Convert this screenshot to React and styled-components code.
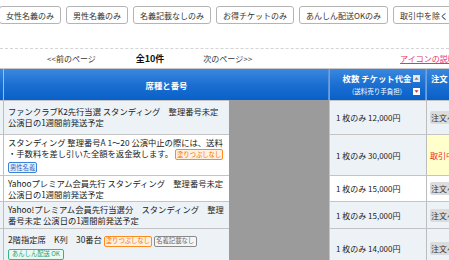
import React from 'react'
import styled, { createGlobalStyle } from 'styled-components'

const GlobalStyle = createGlobalStyle`
    body {
        margin:0;
        overflow:hidden;
        background:#fff;
        font-family:"Noto Sans CJK JP", "Noto Sans", sans-serif;
        color:#222;
    }
`

const filters = ['女性名義のみ', '男性名義のみ', '名義記載なしのみ', 'お得チケットのみ', 'あんしん配送OKのみ', '取引中を除く']

const rows = [
    {
        lines: ['ファンクラブK2先行当選 スタンディング　整理番号未定', '公演日の1週間前発送予定'],
        price: '1 枚のみ 12,000円',
        mainBg: '#edf2f7',
        priceBg: '#edf2f7',
    },
    {
        lines: ['スタンディング 整理番号A 1～20 公演中止の際には、送料', '・手数料を差し引いた全額を返金致します。'],
        tags: ['nofill', 'male'],
        price: '1 枚のみ 30,000円',
        mainBg: '#fff',
        priceBg: '#edf2f7',
        busy: true,
    },
    {
        lines: ['Yahooプレミアム会員先行 スタンディング　整理番号未定', '公演日の1週間前発送予定'],
        price: '1 枚のみ 15,000円',
        mainBg: '#fff',
        priceBg: '#fff',
    },
    {
        lines: ['Yahoo!プレミアム会員先行当選分　スタンディング　整理番号未定 公演日の1週間前発送予定'],
        price: '1 枚のみ 15,000円',
        mainBg: '#edf2f7',
        priceBg: '#edf2f7',
    },
    {
        lines: ['2階指定席　K列　30番台'],
        tags: ['nofill', 'noname', 'safe'],
        price: '1 枚のみ 14,000円',
        mainBg: '#edf2f7',
        priceBg: '#edf2f7',
    },
]

const tagText = {
    nofill: '塗りつぶしなし',
    male: '男性名義',
    noname: '名義記載なし',
    safe: 'あんしん配送 OK',
}

const SortIcons = () => (
    <SortBox>
        <svg width="7" height="7" viewBox="0 0 7 7">
            <rect x="0" y="0" width="7" height="7" fill="#e8e8e8" />
            <path d="M1.5 4.8 L3.5 2.2 L5.5 4.8 Z" fill="#777" />
        </svg>
        <svg width="7" height="7" viewBox="0 0 7 7">
            <rect x="0" y="0" width="7" height="7" fill="#fff" />
            <path d="M1.5 2.2 L3.5 4.8 L5.5 2.2 Z" fill="#e0203a" />
        </svg>
    </SortBox>
)

const App = () => (
    <Page>
        <GlobalStyle />
        <FilterBar>
            {filters.map(f => <FilterButton key={f}>{f}</FilterButton>)}
        </FilterBar>
        <Pager>
            <PagerLink $left={47}>&lt;&lt;前のページ</PagerLink>
            <PagerCount>全10件</PagerCount>
            <PagerLink $left={39}>次のページ&gt;&gt;</PagerLink>
            <HelpLink>アイコンの説明</HelpLink>
        </Pager>
        <Table>
            <HeadCell $col={1} />
            <HeadCell $col="2 / span 2">席種と番号</HeadCell>
            <HeadCell $col={4} $divider>
                <PriceHead>
                    <HeadTitles>
                        <span>枚数 チケット代金</span>
                        <HeadSub>(送料売り手負担)</HeadSub>
                    </HeadTitles>
                    <SortIcons />
                </PriceHead>
            </HeadCell>
            <HeadCell $col={5} $divider $top>注文</HeadCell>

            {rows.map((r, i) => (
                <React.Fragment key={i}>
                    <EdgeCell $row={i + 2} $bg={r.mainBg} />
                    <MainCell $row={i + 2} $bg={r.mainBg}>
                        {r.lines.map((l, j) => (
                            <React.Fragment key={j}>
                                {j > 0 && <br />}
                                {l}
                            </React.Fragment>
                        ))}
                        {r.tags && r.tags.map(t => (
                            <React.Fragment key={t}>
                                {t === 'male' || t === 'safe' ? <br /> : ' '}
                                <Tag $kind={t}>{tagText[t]}</Tag>
                            </React.Fragment>
                        ))}
                    </MainCell>
                    {i === 0 && <Redacted />}
                    <PriceCell $row={i + 2} $bg={r.priceBg}>{r.price}</PriceCell>
                    <OrderCell $row={i + 2} $busy={r.busy} $bg={r.priceBg}>
                        {r.busy ? <Busy>取引中</Busy> : <OrderButton>注文へ進む</OrderButton>}
                    </OrderCell>
                </React.Fragment>
            ))}
        </Table>
    </Page>
)

export default App

const Page = styled.div`
    width:449px;
    height:260px;
    overflow:hidden;
    font-size:8.3px;
`

const FilterBar = styled.div`
    display:flex;
    gap:5px;
    padding:6px 0 0 0;
    margin-left:-1px;
    height:18px;
    white-space:nowrap;
`

const FilterButton = styled.div`
    flex:none;
    display:flex;
    align-items:center;
    height:16px;
    padding:0 6px;
    border:1px solid #b4b4b4;
    border-radius:3px;
    background:#fff;
    color:#333;
    font-size:8px;
`

const Pager = styled.div`
    margin-top:24px;
    height:19px;
    border-top:1px dashed #d4d4d4;
    display:flex;
    align-items:center;
    white-space:nowrap;
    font-size:8px;
`

const PagerLink = styled.span`
    margin-left:${p => p.$left}px;
    color:#333;
`

const PagerCount = styled.span`
    margin-left:40px;
    font-weight:bold;
    font-size:9px;
    color:#111;
`

const HelpLink = styled.span`
    margin-left:148px;
    color:#e8336b;
    text-decoration:underline;
`

const Table = styled.div`
    display:grid;
    grid-template-columns:4px 225px 100px 97px 80px;
    grid-template-rows:31px 34px 41px 26px 27px 40px;
    border-top:1px solid #c8c8c8;
`

const HeadCell = styled.div`
    grid-column:${p => p.$col};
    grid-row:1;
    display:flex;
    align-items:${p => (p.$top ? 'flex-start' : 'center')};
    justify-content:${p => (p.$top ? 'flex-start' : 'center')};
    padding:${p => (p.$top ? '3px 0 0 4px' : '0')};
    background:linear-gradient(to bottom, #3a88de 0%, #1c6fd2 50%, #0860c8 100%);
    border-left:1px solid ${p => (p.$divider ? '#6aa2e2' : 'transparent')};
    border-right:1px solid #5d93d4;
    color:#fff;
    font-weight:bold;
    font-size:8.4px;
    white-space:nowrap;
    overflow:hidden;
    &:first-child {
        border-right:1px solid #9cbde4;
    }
`

const PriceHead = styled.div`
    display:flex;
    align-items:center;
    gap:2px;
    margin-left:8px;
`

const HeadTitles = styled.div`
    display:flex;
    flex-direction:column;
    align-items:center;
    line-height:13px;
`

const HeadSub = styled.span`
    font-weight:normal;
    font-size:6.5px;
`

const SortBox = styled.div`
    display:flex;
    flex-direction:column;
    gap:6px;
    margin-top:1px;
    svg {
        display:block;
    }
`

const BodyCell = styled.div`
    grid-row:${p => p.$row};
    background:${p => p.$bg};
    border-top:1px solid #c4c4c4;
`

const EdgeCell = styled(BodyCell)`
    grid-column:1;
    border-right:1px solid #bdbdbd;
`

const MainCell = styled(BodyCell)`
    grid-column:2;
    padding:${p => (p.$row === 2 || p.$row === 6 ? 5 : 2)}px 0 0 4px;
    line-height:10.6px;
    font-size:8.3px;
    color:#222;
    overflow:hidden;
`

const Redacted = styled.div`
    grid-column:3;
    grid-row:2 / span 5;
    background:#9b9b9b;
`

const PriceCell = styled(BodyCell)`
    grid-column:4;
    display:flex;
    align-items:center;
    padding-left:6px;
    border-left:1px solid #c4c4c4;
    font-size:8px;
    white-space:nowrap;
`

const OrderCell = styled(BodyCell)`
    grid-column:5;
    display:flex;
    align-items:center;
    padding-left:3px;
    border-left:1px solid #bdbdbd;
    background:${p => (p.$busy ? '#ffffcc' : p.$bg)};
    white-space:nowrap;
    overflow:hidden;
`

const OrderButton = styled.span`
    background:#dcdcdc;
    border-radius:2px;
    padding:1px 1px;
    font-size:8px;
    color:#333;
`

const Busy = styled.span`
    color:#e8281e;
    font-size:8px;
`

const tagColors = {
    nofill: { border: '#ff8a1e', bg: '#fff0e0', text: '#f07400', width: '1.5px', pad: '1px' },
    male: { border: '#3a84d8', bg: '#e6f0fb', text: '#2768c8', width: '1.5px', pad: '1px' },
    noname: { border: '#8a8a8a', bg: '#f6f6f6', text: '#666', width: '1px', pad: '1.5px' },
    safe: { border: '#38b389', bg: '#e9f8f1', text: '#2ba078', width: '1.5px', pad: '3px' },
}

const Tag = styled.span`
    display:inline-block;
    line-height:8px;
    padding:0.5px ${p => tagColors[p.$kind].pad};
    margin:1px 0 0 0;
    border:${p => tagColors[p.$kind].width} solid ${p => tagColors[p.$kind].border};
    border-radius:2px;
    background:${p => tagColors[p.$kind].bg};
    color:${p => tagColors[p.$kind].text};
    font-size:6.3px;
    vertical-align:middle;
    white-space:nowrap;
`
